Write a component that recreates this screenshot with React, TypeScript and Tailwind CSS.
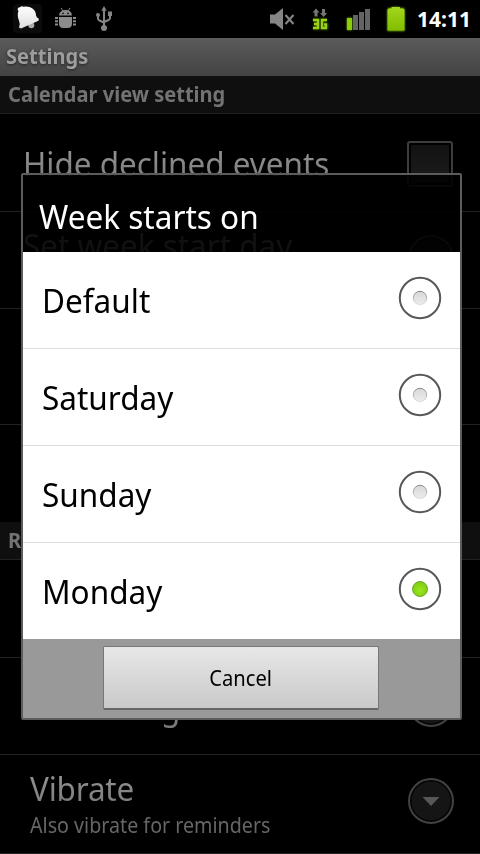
import React from "react";
import clsx from "clsx";

const options = ["Default", "Saturday", "Sunday", "Monday"];

export default function App() {
  return (
    <main className="relative w-[480px] h-[854px] overflow-hidden bg-black font-['Noto_Sans',sans-serif] text-[#8c8c8c]">
      <StatusBar />

      <div className="h-[38px] pl-1.5 bg-gradient-to-b from-[#5b5b5b] to-[#434343] text-[21px] leading-[37px] font-bold text-[#9d9d9d] [text-shadow:0_1px_3px_#222]">
        <Narrow>Settings</Narrow>
      </div>
      <SectionHeader title="Calendar view setting" />

      <Row className="h-[98px] pl-[23px]">
        <RowTitle className="mt-[29px]">Hide declined events</RowTitle>
        <span className="ml-auto mr-[27px] mt-[27px] size-[46px] rounded-[3px] border-2 border-[#3d3d3d] p-0.5">
          <span className="block size-full bg-gradient-to-b from-[#121212] to-[#1c1c1c]" />
        </span>
      </Row>
      <Row className="h-[97px] pl-[23px]">
        <RowTitle className="mt-[13px]">Set week start day</RowTitle>
        <More />
      </Row>
      <Row className="h-[116px]" />
      <Row className="h-[97px] border-b-0" />
      <SectionHeader title="Reminder settings" />
      <Row className="h-[98px]" />
      <Row className="h-[97px] pl-[25px]">
        <RowTitle className="mt-[29px]">Select ringtone</RowTitle>
        <More />
      </Row>
      <Row className="h-[99px] pl-[30px]">
        <div className="mt-[13px]">
          <RowTitle className="tracking-[-0.2px]">Vibrate</RowTitle>
          <p className="mt-0.5 text-[21px] leading-[26px] whitespace-nowrap text-[#666] origin-left scale-x-[.937]">
            Also vibrate for reminders
          </p>
        </div>
        <More />
      </Row>

      {/* Dialog */}
      <div className="absolute left-[21px] top-[173px] w-[441px] h-[547px] flex flex-col rounded-[2px] border-2 border-[#5c5c5c]">
        <h2 className="h-[77px] pl-4 bg-black/88 text-white text-[33px] leading-[83px] whitespace-nowrap">
          <Narrow>Week starts on</Narrow>
        </h2>
        <ul className="bg-white text-black">
          {options.map((name, i) => (
            <li
              key={name}
              className={clsx(
                "flex items-center justify-between pl-[19px] pr-[18px]",
                i < options.length - 1 ? "h-[97px] border-b border-[#dedede]" : "h-[96px]"
              )}
            >
              <span className="text-[33px] leading-[40px] mt-[1px]">
                <Narrow>{name}</Narrow>
              </span>
              <Radio checked={name === "Monday"} />
            </li>
          ))}
        </ul>
        <div className="flex-1 pl-20 pt-[7px] bg-[#999]">
          <button className="w-[276px] h-[64px] pt-0.5 rounded-[2px] border border-[#777] border-b-2 border-b-[#666] bg-gradient-to-b from-[#e7e7e7] to-[#c9c9c9] text-[21px] text-black">
            <span className="inline-block scale-x-[.96]">Cancel</span>
          </button>
        </div>
      </div>
    </main>
  );
}

function Narrow({ children }: { children: React.ReactNode }) {
  return <span className="inline-block origin-left scale-x-[.955]">{children}</span>;
}

function StatusBar() {
  return (
    <div className="h-[38px] flex items-center bg-black">
      <svg width="260" height="38" viewBox="0 0 260 38">
        <defs>
          <linearGradient id="bell" x1="0" y1="0" x2="0" y2="1">
            <stop offset="0" stopColor="#fff" />
            <stop offset="1" stopColor="#ddd" />
          </linearGradient>
        </defs>
        <rect x="13" y="4" width="29" height="29" rx="4" fill="#0b0b0b" />
        {/* bell */}
        <circle cx="31.300" cy="25.200" r="3" fill="#aaa" />
        <path
          d="M17.500 9.500Q17.500 7.300 20 7.300Q21.500 5.300 23.500 6.800Q29 6 32.500 8.500Q36 11 36 15.500Q36.300 17.500 38.800 18.700L38.500 20.800L21 28.500L19 27.500Q20.500 23.500 18.800 20Q16.800 15 18.500 11Z"
          fill="url(#bell)"
        />
        {/* debug droid */}
        <g fill="#8b8b8b">
          <path d="M59 15.500Q59.500 10 65.500 10T72 15.500Z" />
          <path d="M59 17H72V23.500Q72 28 67.500 28H63.500Q59 28 59 23.500Z" />
          <path d="M55 17h3v2h-3zM55 20.300h3v2h-3zM55 23.600h3v2h-3zM73 17h3v2h-3zM73 20.300h3v2h-3zM73 23.600h3v2h-3z" />
          <path d="M61 8l2 3M70 8l-2 3" stroke="#8b8b8b" strokeWidth="1" />
          <circle cx="63" cy="13.300" r="0.900" fill="#111" />
          <circle cx="68" cy="13.300" r="0.900" fill="#111" />
        </g>
        {/* usb */}
        <g fill="none" stroke="#858585" strokeWidth="2">
          <path d="M104 9V28M98 16V18.500Q98 20 99.500 20.500L104 22.500M110 15V18Q110 19.500 108.500 20L104 22" />
          <circle cx="104" cy="28" r="3" fill="#858585" stroke="none" />
          <path d="M101.300 10.800L104 6L106.700 10.800Z" fill="#858585" stroke="none" />
          <circle cx="98" cy="15" r="2" fill="#858585" stroke="none" />
          <path d="M108 11.500h4v4.500h-4z" fill="#858585" stroke="none" />
        </g>
      </svg>
      <svg width="157" height="38" viewBox="260 0 157 38">
        <defs>
          <linearGradient id="battery" x1="0" y1="0" x2="0" y2="1">
            <stop offset="0" stopColor="#a4d61c" />
            <stop offset="1" stopColor="#80bd00" />
          </linearGradient>
          <filter id="glow" x="-40%" y="-40%" width="180%" height="180%">
            <feGaussianBlur stdDeviation="1.3" />
          </filter>
        </defs>
        {/* muted speaker */}
        <path d="M270 14.5H275L283 8V30L275 23.5H270Z" fill="#858585" />
        <path d="M285.5 15L293.5 24M293.5 15L285.5 24" stroke="#858585" strokeWidth="2.1" />
        {/* data */}
        <path d="M316 8.500L319.500 12.500H317.500V16.500H314.500V12.500H312.500ZM323.500 17L327.200 13H325V9H322V13H320Z" fill="#777" />
        <path
          d="M313 20H318V28H313M314 24H318M327 20H322V28H326.500V24.500H324"
          fill="none"
          stroke="#5c9000"
          strokeWidth="3.500"
          opacity=".6"
          filter="url(#glow)"
        />
        <path d="M313 20H318V28H313M314 24H318M327 20H322V28H326V24.500H324" fill="none" stroke="#9ad21b" strokeWidth="2.300" />
        {/* signal */}
        <rect x="347" y="18" width="5" height="12" fill="#7fc000" filter="url(#glow)" />
        <rect x="347" y="18" width="5" height="12" fill="#8ccb0a" />
        <path d="M353 15h5v15h-5zM359 12h5v18h-5zM365 9h5v21h-5z" fill="#646464" />
        {/* battery */}
        <path d="M389 8H392V7H399V8H403Q404.500 8 404.500 10V31H387.500V10Q387.500 8 389 8Z" fill="#7fb800" filter="url(#glow)" />
        <path d="M389 8.500H391.500V7H400V8.500H402.500Q404.500 8.500 404.500 10.500V30.500H387.500V10.500Q387.500 8.500 389 8.500Z" fill="url(#battery)" />
      </svg>
      <span className="text-[21px] leading-[38px] font-bold text-white">14:11</span>
    </div>
  );
}

function SectionHeader({ title }: { title: string }) {
  return (
    <div className="h-[38px] pl-2 bg-[#0f0f0f] border-b border-[#222] text-[21px] leading-[37px] font-bold text-[#737373]">
      <Narrow>{title}</Narrow>
    </div>
  );
}

function Row({ className, children }: { className?: string; children?: React.ReactNode }) {
  return <div className={clsx("flex items-start border-b border-[#222]", className)}>{children}</div>;
}

function RowTitle({ className, children }: { className?: string; children: React.ReactNode }) {
  return (
    <p
      className={clsx(
        "w-fit text-[33px] leading-[42px] whitespace-nowrap origin-left scale-x-[.953] bg-gradient-to-b from-[#999] to-[#777] bg-clip-text text-transparent",
        className
      )}
    >
      {children}
    </p>
  );
}

function More() {
  return (
    <svg className="ml-auto mr-[26px] mt-[23px] shrink-0" width="46" height="46" viewBox="0 0 46 46">
      <circle cx="23" cy="23" r="22" fill="#050505" stroke="#424242" strokeWidth="2" />
      <circle cx="23" cy="23" r="19.500" fill="#151515" />
      <path d="M14.500 19H31.500L23 28Z" fill="#575757" />
    </svg>
  );
}

function Radio({ checked }: { checked: boolean }) {
  return (
    <svg width="44" height="44" viewBox="0 0 44 44" className="-mt-1">
      <defs>
        <radialGradient id="dotOn" cx=".5" cy=".6" r=".6">
          <stop offset="0" stopColor="#9be51c" />
          <stop offset="1" stopColor="#7ccc10" />
        </radialGradient>
        <linearGradient id="dotOff" x1="0" y1="0" x2="0" y2="1">
          <stop offset="0" stopColor="#d8d8d8" />
          <stop offset="1" stopColor="#ececec" />
        </linearGradient>
        <linearGradient id="dotRim" x1="0" y1="0" x2="0" y2="1">
          <stop offset="0" stopColor="#858585" />
          <stop offset="1" stopColor="#e2e2e2" />
        </linearGradient>
      </defs>
      <circle cx="22" cy="22" r="20.200" fill="none" stroke="#58575a" strokeWidth="2" />
      {checked ? (
        <circle cx="22" cy="22" r="7.500" fill="url(#dotOn)" stroke="#71a52c" strokeWidth="1" />
      ) : (
        <circle cx="22" cy="22" r="6.700" fill="url(#dotOff)" stroke="url(#dotRim)" strokeWidth="1" />
      )}
    </svg>
  );
}
